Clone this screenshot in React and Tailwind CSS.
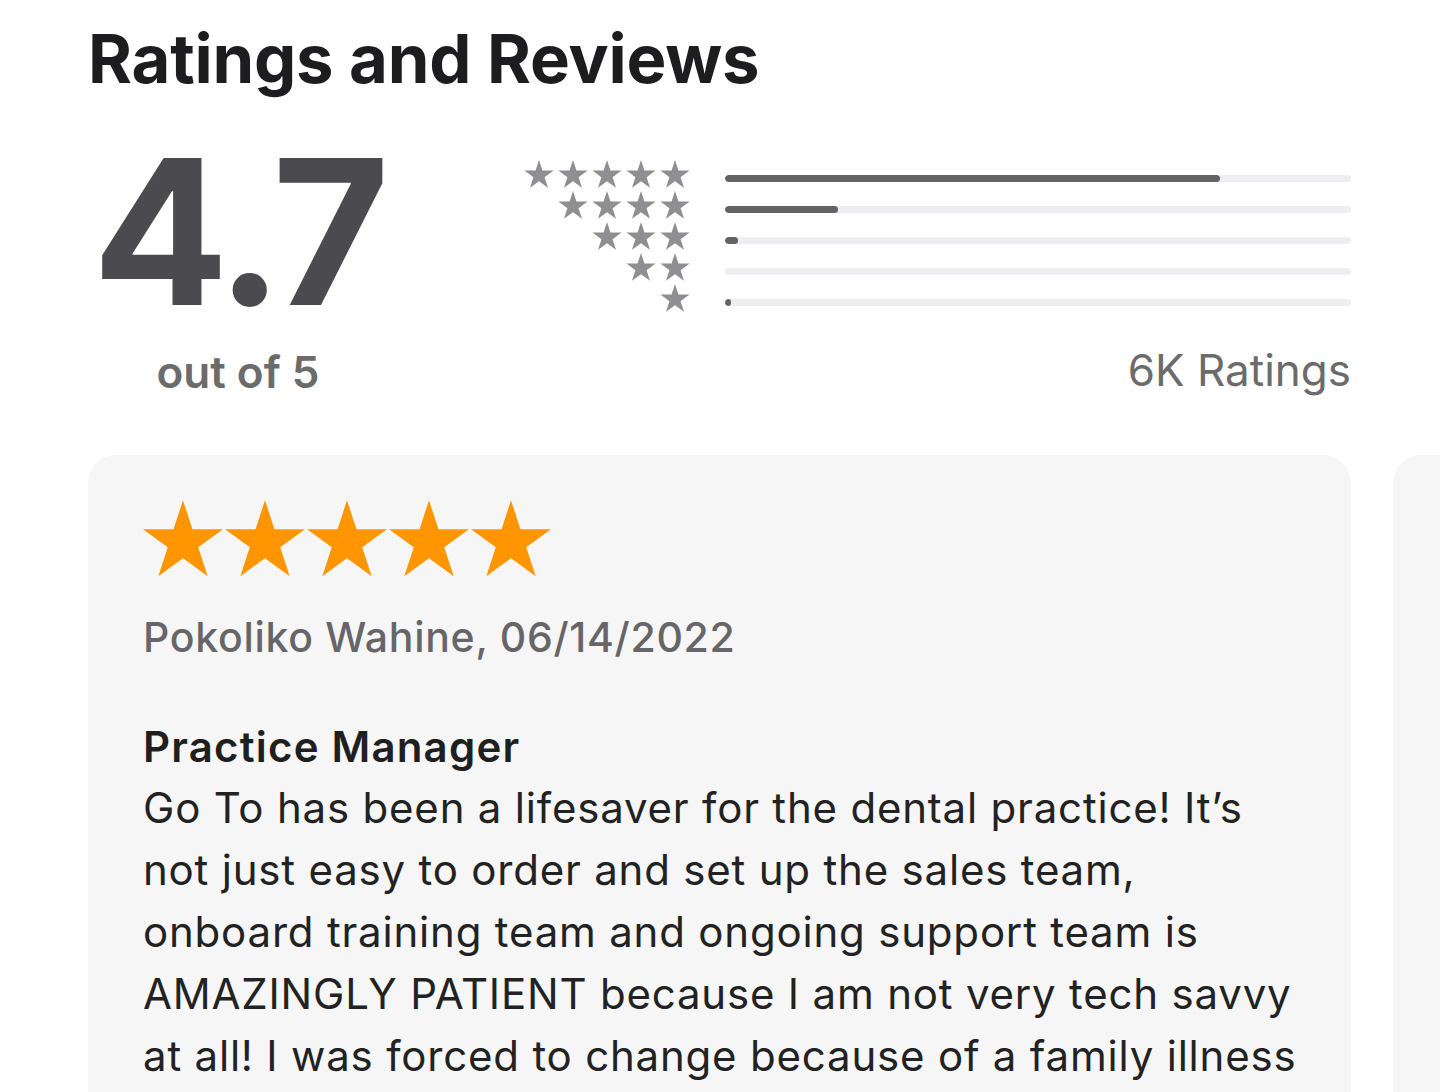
import React from "react";

const Star = ({ className }) => (
  <svg viewBox="0 0 24 23" className={className} fill="currentColor">
    <path d="M12 0L14.83 8.71L23.98 8.71L16.57 14.09L19.41 22.79L12 17.41L4.59 22.79L7.43 14.09L0.02 8.71L9.17 8.71Z" />
  </svg>
);

const bars = [79, 18, 2, 0, 1];

const lines = [
  "Go To has been a lifesaver for the dental practice! It’s",
  "not just easy to order and set up the sales team,",
  "onboard training team and ongoing support team is",
  "AMAZINGLY PATIENT because I am not very tech savvy",
  "at all! I was forced to change because of a family illness",
  "and I couldn’t be happier with the result.",
];

export default function App() {
  return (
    <div
      className="w-[1440px] h-[1092px] overflow-hidden bg-white"
      style={{ fontFamily: "Inter, 'Open Sans', sans-serif" }}
    >
      <div className="pl-[88px] pr-[89px] pt-[19px]">
        <h1 className="text-[67px] leading-[80px] font-bold text-[#1d1d1f] tracking-[-0.2px]">
          Ratings and Reviews
        </h1>

        {/* summary */}
        <div className="flex mt-[43px]">
          <div className="w-[300px] flex flex-col items-center">
            <div className="text-[202px] leading-[180px] font-bold text-[#4a4a4f] tracking-[-6px]">
              4.7
            </div>
            <div className="mt-[24px] text-[44px] leading-[52px] font-semibold text-[#6b6b6b]">
              out of 5
            </div>
          </div>

          <div className="flex-1 flex flex-col pt-[18px]">
            <div className="flex items-start">
              <div className="ml-[136px] flex flex-col items-end gap-[3px]">
                {[5, 4, 3, 2, 1].map((n) => (
                  <div key={n} className="flex gap-[4px] h-[28px]">
                    {[...Array(n)].map((_, i) => (
                      <Star key={i} className="w-[30px] h-[28px] text-[#8e8e93]" />
                    ))}
                  </div>
                ))}
              </div>
              <div className="flex-1 ml-[35px] flex flex-col gap-[24px] pt-[15px]">
                {bars.map((w, i) => (
                  <div key={i} className="h-[7px] rounded-full bg-[#eeeef2] overflow-hidden">
                    <div className="h-full rounded-full bg-[#636365]" style={{ width: `${w}%` }} />
                  </div>
                ))}
              </div>
            </div>
            <div className="mt-[32px] text-right text-[44px] leading-[52px] text-[#6b6b6b]">
              6K Ratings
            </div>
          </div>
        </div>

        {/* reviews */}
        <div className="flex gap-[42px] mt-[57px]">
          <div className="w-[1263px] shrink-0 h-[700px] rounded-[28px] bg-[#f6f6f6] px-[55px] pt-[45px]">
            <div className="flex gap-[2px]">
              {[...Array(5)].map((_, i) => (
                <Star key={i} className="w-[80px] h-[77px] text-[#ff9500]" />
              ))}
            </div>
            <div className="mt-[36px] text-[41px] leading-[48px] font-medium text-[#666668] tracking-[0.7px]">
              Pokoliko Wahine, 06/14/2022
            </div>
            <div className="mt-[61px] text-[42px] leading-[50px] font-semibold text-[#1f1f1f] tracking-[1.2px]">
              Practice Manager
            </div>
            <div className="mt-[5px] text-[42px] leading-[62px] text-[#222222] tracking-[0.8px]">
              {lines.map((l) => (
                <div key={l} className="whitespace-nowrap">
                  {l}
                </div>
              ))}
            </div>
          </div>
          <div className="w-[1263px] shrink-0 h-[700px] rounded-[28px] bg-[#f6f6f6]" />
        </div>
      </div>
    </div>
  );
}
